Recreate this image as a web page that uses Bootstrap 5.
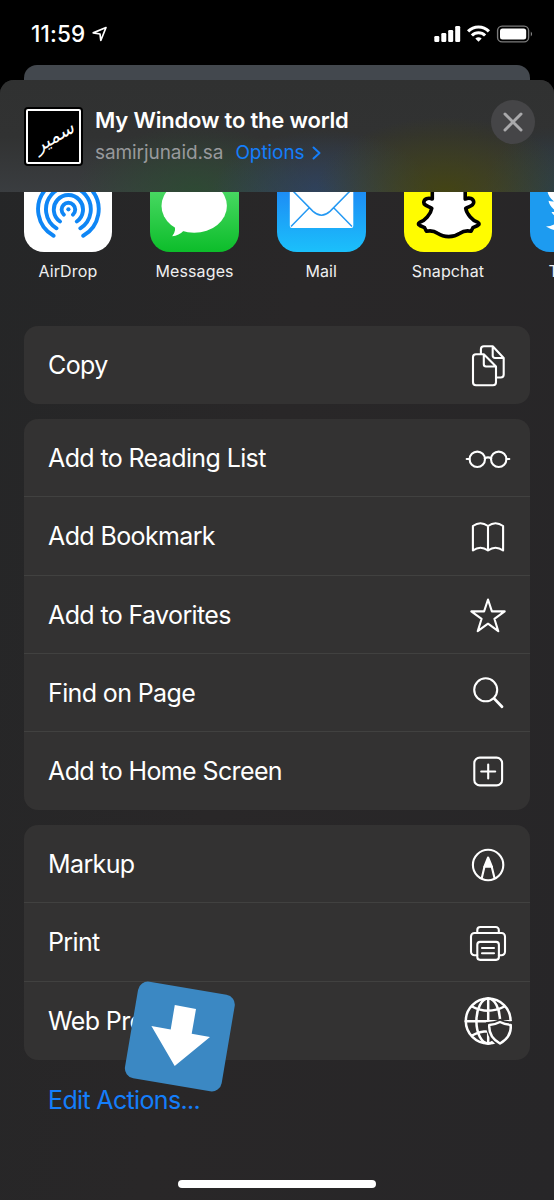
<!DOCTYPE html>
<html lang="en">
<head>
<meta charset="utf-8">
<meta name="viewport" content="width=device-width, initial-scale=1">
<title>Share sheet</title>
<link href="https://cdn.jsdelivr.net/npm/bootstrap@5.3.0/dist/css/bootstrap.min.css" rel="stylesheet">
<style>
body{background:#000;color:#fff;font-family:Inter,"Liberation Sans",sans-serif;overflow:hidden}
svg{display:block;flex:none}
.screen{width:554px;height:1200px}
.status{height:65px;padding:3px 21px 0 31px}
.clock{font-size:22.5px;font-weight:500;letter-spacing:.15px;line-height:1}
.behind{height:15px;margin:0 24px;background:#43484e;border-radius:13px 13px 0 0}
.sheet{height:1120px;border-radius:14px 14px 0 0;background:linear-gradient(100deg,#252627,#292728 45%,#272628)}
.sheet-head{height:112px;padding:0 19px 0 24px;background:
 radial-gradient(ellipse 130px 75px at 445px 112px,rgba(70,70,5,.75),transparent),
 radial-gradient(ellipse 110px 62px at 322px 112px,rgba(42,68,105,.7),transparent),
 radial-gradient(ellipse 120px 66px at 195px 112px,rgba(42,78,48,.75),transparent),
 radial-gradient(ellipse 70px 66px at 554px 112px,rgba(37,64,82,.7),transparent),
 linear-gradient(#303131,#313232 50%,#3a3d40)}
.thumb{width:59px;height:59px;background:#000;border-radius:4px;padding:2px}
.thumb-in{border:2px solid #fff;border-radius:2px;font:italic 19px "DejaVu Sans",sans-serif}
.thumb-in span{transform:rotate(-30deg);line-height:1}
.ttl{font-size:22px;font-weight:600;line-height:26px;letter-spacing:-.19px}
.sub{font-size:19px;line-height:24px;letter-spacing:-.08px;color:#98999c}
.blue{color:#147efb}
.round-x{width:44px;height:44px;background:#454547;border:0;padding:0;margin-bottom:28px}
.apps{height:134px;gap:38.1px;padding-left:23.6px;overflow:hidden}
.app{width:88.6px;flex:none}
.tile{height:60px;border-radius:0 0 20px 20px;overflow:hidden}
.app-name{font-size:16px;line-height:20px;margin-top:9px;letter-spacing:.12px;color:#efeff0}
.group{margin:0 24px 15px;border-radius:14px;background:#333232}
.action{height:78.2px;padding:0 18px 0 24px;font-size:25px;letter-spacing:-.62px;line-height:1}
.action:not(:last-child){border-bottom:1px solid #414140}
.action>span{padding-top:2px}
.action svg{fill:none;stroke:#fff;stroke-width:2.1;stroke-linecap:round;stroke-linejoin:round}
.edit{font-size:25px;letter-spacing:-.65px;line-height:30px;padding:11px 0 0 48px;margin-top:-1px}
.down-badge{left:99.5px;top:-.5px;z-index:2}
.action .down-badge{stroke:none}
.bar{width:198px;height:8px;bottom:12px;border-radius:4px;background:#fff}
</style>
</head>
<body>
<main class="screen position-relative overflow-hidden">
  <header class="status d-flex align-items-center">
    <span class="clock">11:59</span>
    <svg class="ms-1" width="20" height="18" viewBox="0 0 20 18" fill="none" stroke="#fff" stroke-width="1.7" stroke-linejoin="round"><path d="M17 2.5 4.200 7.900 11 9 11.800 15.500Z"/></svg>
    <svg class="ms-auto" width="100" height="20" viewBox="0 0 100 20">
      <g fill="#fff"><rect x="1.3" y="12" width="5" height="6" rx="1.3"/><rect x="8.3" y="9" width="5" height="9" rx="1.3"/><rect x="15.2" y="6" width="5" height="12" rx="1.3"/><rect x="22.2" y="2" width="5" height="16" rx="1.3"/></g>
      <g fill="none" stroke="#fff" stroke-width="3.1"><path d="M35.1 7.3a14.6 14.6 0 0 1 20.8 0"/><path d="M38.9 11.5a9.4 9.4 0 0 1 13.2 0"/></g>
      <path d="M45.5 17.7l-3.2-3.1a5 5 0 0 1 6.4 0z" fill="#fff"/>
      <rect x="64.6" y="2.1" width="31" height="15.8" rx="4.5" fill="none" stroke="#7b7b7b" stroke-width="1.4"/><rect x="67" y="4.4" width="26.2" height="11.2" rx="2.5" fill="#fff"/><path d="M97.8 7.4q2.5 2.6 0 5.2z" fill="#8a8a8a"/>
    </svg>
  </header>
  <div class="behind"></div>
  <section class="sheet overflow-hidden">
    <div class="sheet-head d-flex align-items-center">
      <div class="thumb"><div class="thumb-in w-100 h-100 d-flex align-items-center justify-content-center"><span lang="ar" dir="rtl">سمير</span></div></div>
      <div class="ms-2 ps-1">
        <div class="ttl text-nowrap">My Window to the world</div>
        <div class="sub d-flex align-items-center mt-1 pt-1"><span>samirjunaid.sa</span><span class="blue ms-2 ps-1">Options</span>
          <svg class="ms-1" width="12" height="16" viewBox="0 0 12 16" fill="none" stroke="#147efb" stroke-width="2" stroke-linecap="round" stroke-linejoin="round"><path d="M4.500 2.5 10.500 8l-6 5.5"/></svg></div>
      </div>
      <button class="round-x rounded-circle ms-auto d-flex align-items-center justify-content-center" aria-label="Close"><svg width="22" height="22" viewBox="0 0 22 22" stroke="#a9a9ab" stroke-width="3" stroke-linecap="round"><path d="M3 3 19 19M19 3 3 19"/></svg></button>
    </div>
    <div class="apps d-flex">
      <div class="app"><div class="tile bg-white"><svg width="89" height="60" viewBox="0 0 89 60" fill="none" stroke="#0f86f5" stroke-width="3.9" stroke-linecap="round"><path d="M29.6 43.8A30.3 30.3 0 1 1 59.2 43.8M32.5 36.3A22.4 22.4 0 1 1 56.3 36.3M36 29.5A14.6 14.6 0 1 1 52.8 29.5M39.8 22.6A6.8 6.8 0 1 1 49 22.6"/><circle cx="44.4" cy="17.3" r="2.1" fill="#0f86f5" stroke="none"/></svg></div><div class="app-name text-center">AirDrop</div></div>
      <div class="app"><div class="tile" style="background:linear-gradient(#47d861,#0cbd2a)"><svg width="89" height="60" viewBox="0 0 89 60" fill="#fff"><ellipse cx="44.2" cy="14" rx="32.7" ry="26.8"/><path d="M24 31q3 7-1.8 13.3 6.500-.4 12-6z"/></svg></div><div class="app-name text-center">Messages</div></div>
      <div class="app"><div class="tile" style="background:linear-gradient(#1d8df5,#1bc0fb)"><svg width="89" height="60" viewBox="0 0 89 60" fill="none" stroke="#2599f3" stroke-width="1.5"><path d="M12.800-3h63.500v37a2 2 0 0 1-2 2h-59.500a2 2 0 0 1-2-2z" fill="#fff" stroke="none"/><path d="M15.500-1.500 36 19.400Q44.500 27 53 19.400L73.500-1.500M32.300 15.800 14 34.500M56.700 15.800 75 34.500"/></svg></div><div class="app-name text-center">Mail</div></div>
      <div class="app"><div class="tile" style="background:#fffc00"><svg width="89" height="60" viewBox="0 0 89 60" fill="#fff" stroke="#000" stroke-width="3.6" stroke-linejoin="round"><path d="M28.300-4V7C24 5.200 20.200 7 19.800 10S23.500 14 27.800 16.300C27 22 20.500 29 15.800 30.300Q13 32 15.800 33.500L20.600 35.700 22.400 39.200C27 38.300 30.500 39 33.500 41.200 40 45.700 49.500 45.700 56 41.200 59 39 62.500 38.300 67.100 39.200L68.900 35.700 73.700 33.500Q76.500 32 73.700 30.300C69 29 62.500 22 61.700 16.300 66 14 70 13.500 69.700 10S65.500 5.200 61.200 7V-4"/></svg></div><div class="app-name text-center">Snapchat</div></div>
      <div class="app"><div class="tile" style="background:#1d9bf0"><svg width="89" height="60" viewBox="0 0 89 60" fill="#fff"><path d="M17.600 0Q18.500 5 24 9.500q-3 .2-5.500-.8Q19.500 15 27 19.500q-3 .8-5.500.4Q24 25 31 27 25 34 16 34.500 27 41 42 40 62 35 65 10V-5H17.600z"/></svg></div><div class="app-name text-center">Twitter</div></div>
    </div>

    <div class="group">
      <div class="action d-flex align-items-center justify-content-between"><span class="pt-0">Copy</span><svg width="48" height="48" viewBox="0 0 48 48"><path d="M19.800 13.300H12a3 3 0 0 0-3 3v25a3 3 0 0 0 3 3h17a3 3 0 0 0 3-3V25.500zM19.800 13.300v10a2.200 2.200 0 0 0 2.200 2.200h10M16.900 13V8.300a3 3 0 0 1 3-3h8.800L39.700 17v16.500a3 3 0 0 1-3 3H32.500M28.700 5.500v9.300a2.200 2.200 0 0 0 2.200 2.200h8.800"/></svg></div>
    </div>
    <div class="group">
      <div class="action d-flex align-items-center justify-content-between"><span>Add to Reading List</span><svg width="48" height="48" viewBox="0 0 48 48"><circle cx="13.300" cy="25.300" r="7.700"/><circle cx="34.700" cy="25.300" r="7.700"/><path d="M20.800 24.300q3.200-1.800 6.400 0M2.700 25h2.700M42.600 25h2.700"/></svg></div>
      <div class="action d-flex align-items-center justify-content-between"><span>Add Bookmark</span><svg width="48" height="48" viewBox="0 0 48 48"><path d="M24 14V38.500Q16.500 33 8.900 38.500V14Q16.500 8.500 24 14 31.500 8.500 39.100 14V38.500Q31.500 33 24 38.500"/></svg></div>
      <div class="action d-flex align-items-center justify-content-between"><span>Add to Favorites</span><svg width="48" height="48" viewBox="0 0 48 48"><path d="M24 9.500 27.900 21.400 40.700 21.400 30.400 28.800 34.300 41.200 24 33.700 13.700 41.200 17.600 28.800 7.300 21.400 20.100 21.400Z"/></svg></div>
      <div class="action d-flex align-items-center justify-content-between"><span>Find on Page</span><svg width="48" height="48" viewBox="0 0 48 48"><circle cx="21.700" cy="21.800" r="11.500"/><path d="M30.200 30.600 38 38.700" stroke-width="2.800"/></svg></div>
      <div class="action d-flex align-items-center justify-content-between"><span class="pt-0">Add to Home Screen</span><svg width="48" height="48" viewBox="0 0 48 48"><rect x="10.300" y="10.600" width="27.800" height="27.800" rx="5.500"/><path d="M24.200 17.500v14M17.200 24.500h14"/></svg></div>
    </div>
    <div class="group">
      <div class="action d-flex align-items-center justify-content-between"><span>Markup</span><svg width="48" height="48" viewBox="0 0 48 48"><circle cx="24.100" cy="25" r="15.200"/><path d="M20.400 27 17.800 38M27.800 27 30.500 38" /><path d="M24.100 17.500 20.300 26.800H28z" fill="#fff"/></svg></div>
      <div class="action d-flex align-items-center justify-content-between"><span>Print</span><svg width="48" height="48" viewBox="0 0 48 48"><path d="M13.200 37.200H10.500a3.500 3.500 0 0 1-3.500-3.500V18.500a3.500 3.500 0 0 1 3.500-3.500h27a3.500 3.500 0 0 1 3.500 3.500v15.200a3.500 3.500 0 0 1-3.500 3.500H34.900M13.300 14.500V12a3 3 0 0 1 3-3h15.500a3 3 0 0 1 3 3v2.500M18 30h12M18 35.300h12"/><rect x="13.300" y="23.900" width="21.600" height="18" rx="2.800"/></svg></div>
      <div class="action d-flex align-items-center justify-content-between position-relative"><span>Web Pro</span>
        <svg class="down-badge position-absolute" width="112" height="112" viewBox="0 0 112 112"><rect x="6.800" y="6.500" width="98" height="98" rx="10" fill="#3b88c3" transform="rotate(9.600 55.750 55.750)"/><path fill="#fff" d="M50.800 24.100 72 28.100 67.700 52.800 86 56.100 50.700 85.100 27.400 45.100 46.700 48.400z"/></svg>
        <svg width="48" height="48" viewBox="0 0 48 48"><g stroke-width="2.500"><circle cx="24.200" cy="24" r="22.400"/><path d="M24.200 1.500v45M1.700 24.300h45M8 9.500Q24 18 40.400 9.500M8 38.500Q24 30 40.400 38.500"/><ellipse cx="24.200" cy="24" rx="11.800" ry="22.400"/></g><path d="M36 21.800Q30 25 22 25.200 21 40 34 49L49 48V23.800Q42 25 36 21.800z" fill="#333232" stroke="none"/><path d="M36 25Q31 27.700 25.300 27.900 24.300 40 36 46.500 47.700 40 46.700 27.900 41 27.700 36 25z" stroke-width="2.500"/></svg></div>
    </div>
    <div class="edit blue">Edit Actions...</div>
  </section>
  <div class="bar position-absolute start-50 translate-middle-x"></div>
</main>
<script src="https://cdn.jsdelivr.net/npm/bootstrap@5.3.0/dist/js/bootstrap.bundle.min.js"></script>
</body>
</html>
